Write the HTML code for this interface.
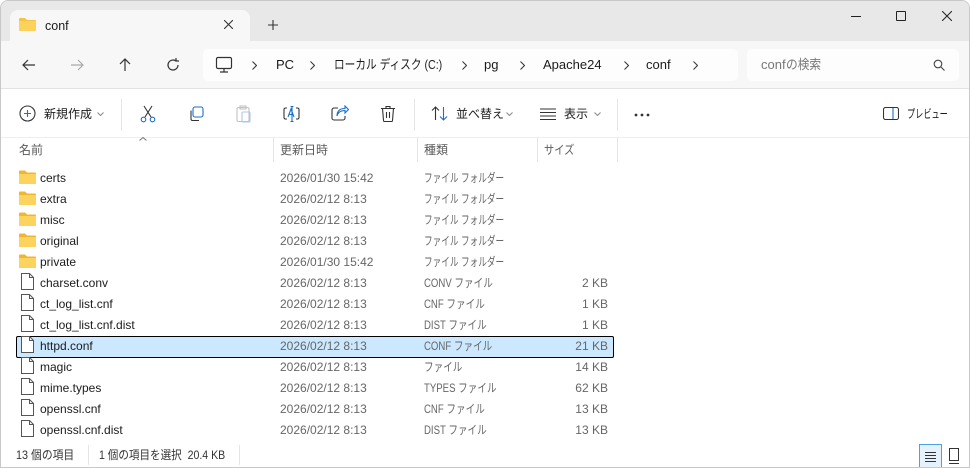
<!DOCTYPE html>
<html><head><meta charset="utf-8"><style>
*{box-sizing:border-box;margin:0;padding:0}
body{width:970px;height:468px;overflow:hidden;background:#fff;font-family:"Liberation Sans","Noto Sans CJK JP",sans-serif;font-size:12px;color:#1b1b1b;position:relative}
.abs{position:absolute}
.win{position:absolute;left:0;top:0;width:970px;height:468px;border:1px solid #c8c8c8;border-radius:8px 8px 0 0;overflow:hidden}
.title{position:absolute;left:0;top:0;width:970px;height:40px;background:#e8e8e8}
.tab{position:absolute;left:9px;top:9px;width:240px;height:32px;background:#f7f7f7;border-radius:8px 8px 0 0}
.nav{position:absolute;left:0;top:40px;width:970px;height:48px;background:#f7f7f7;border-bottom:1px solid #e2e2e2}
.addr{position:absolute;left:202px;top:48px;width:535px;height:32px;background:#fdfdfd;border-radius:5px}
.search{position:absolute;left:746px;top:48px;width:212px;height:32px;background:#fdfdfd;border-radius:5px}
.t{position:absolute;white-space:nowrap;line-height:16px;transform-origin:0 50%}
.hdr{color:#5b5b5b}
.sep{position:absolute;width:1px;background:#e5e5e5}
svg{position:absolute}
</style></head><body>
<div class="win">
<div class="title"></div>
<div class="tab"></div>
<svg style="left:18px;top:16px" width="17" height="14" viewBox="0 0 17 14"><path d="M0 2a1 1 0 0 1 1-1h5l2 2h8a1 1 0 0 1 1 1v9a1 1 0 0 1-1 1H1a1 1 0 0 1-1-1z" fill="#f5c242"/><path d="M0 4h17v9a1 1 0 0 1-1 1H1a1 1 0 0 1-1-1z" fill="#fbd25a"/></svg>
<div class="t" style="left:44px;top:17px;font-size:12.5px">conf</div>
<svg style="left:223px;top:19px" width="9" height="9" viewBox="0 0 9 9" stroke="#333" stroke-width="1.1"><path d="M0 0l9 9M9 0L0 9"/></svg>
<svg style="left:267px;top:19px" width="10" height="10" viewBox="0 0 10 10" stroke="#333" stroke-width="1.1"><path d="M5 0v10M0 5h10"/></svg>
<div class="abs" style="left:850px;top:15px;width:10px;height:1px;background:#222"></div>
<div class="abs" style="left:895px;top:10px;width:10px;height:10px;border:1px solid #222;border-radius:1px"></div>
<svg style="left:941px;top:10px" width="10" height="10" viewBox="0 0 10 10" stroke="#222" stroke-width="1"><path d="M0 0l10 10M10 0L0 10"/></svg>
<div class="nav"></div>
<div class="addr"></div><div class="search"></div>
<svg style="left:20px;top:56px" width="16" height="16" viewBox="0 0 16 16" fill="none" stroke="#333" stroke-width="1.2"><path d="M14 8H2M7 3L2 8l5 5"/></svg>
<svg style="left:68px;top:56px" width="16" height="16" viewBox="0 0 16 16" fill="none" stroke="#aaa" stroke-width="1.2"><path d="M2 8h12M9 3l5 5-5 5"/></svg>
<svg style="left:116px;top:56px" width="16" height="16" viewBox="0 0 16 16" fill="none" stroke="#333" stroke-width="1.2"><path d="M8 14V2M3 7l5-5 5 5"/></svg>
<svg style="left:164px;top:56px" width="16" height="16" viewBox="0 0 16 16" fill="none" stroke="#333" stroke-width="1.2"><path d="M13 8a5 5 0 1 1-2-4M11 1v3h3"/></svg>
<svg style="left:214px;top:55px" width="18" height="18" viewBox="0 0 18 18" fill="none" stroke="#333" stroke-width="1.2"><rect x="1.5" y="1.5" width="15" height="11" rx="1.5"/><path d="M9 12.5v3M5 16h8"/></svg>
<svg style="left:251px;top:60px" width="5" height="9" viewBox="0 0 5 9" fill="none" stroke="#333"><path d="M0.5 0.5l4 4-4 4"/></svg>
<div class="t" style="left:275px;top:56px;font-size:13px">PC</div>
<svg style="left:309px;top:60px" width="5" height="9" viewBox="0 0 5 9" fill="none" stroke="#333"><path d="M0.5 0.5l4 4-4 4"/></svg>
<div class="t" style="left:333px;top:56px;font-size:13px;transform:scaleX(.82)">ローカル ディスク (C:)</div>
<svg style="left:461px;top:60px" width="5" height="9" viewBox="0 0 5 9" fill="none" stroke="#333"><path d="M0.5 0.5l4 4-4 4"/></svg>
<div class="t" style="left:483px;top:56px;font-size:13px">pg</div>
<svg style="left:519px;top:60px" width="5" height="9" viewBox="0 0 5 9" fill="none" stroke="#333"><path d="M0.5 0.5l4 4-4 4"/></svg>
<div class="t" style="left:542px;top:56px;font-size:13px">Apache24</div>
<svg style="left:623px;top:60px" width="5" height="9" viewBox="0 0 5 9" fill="none" stroke="#333"><path d="M0.5 0.5l4 4-4 4"/></svg>
<div class="t" style="left:645px;top:56px;font-size:13px">conf</div>
<svg style="left:692px;top:60px" width="5" height="9" viewBox="0 0 5 9" fill="none" stroke="#333"><path d="M0.5 0.5l4 4-4 4"/></svg>
<div class="t" style="left:760px;top:56px;font-size:13px;color:#777">conf<span style="display:inline-block;transform:scaleX(.9);transform-origin:0 50%">の検索</span></div>
<svg style="left:932px;top:58px" width="12" height="12" viewBox="0 0 12 12" fill="none" stroke="#444" stroke-width="1.1"><circle cx="5" cy="5" r="3.8"/><path d="M8 8l3.5 3.5"/></svg>
<!-- toolbar -->
<svg style="left:18px;top:104px" width="17" height="17" viewBox="0 0 17 17" fill="none" stroke="#333" stroke-width="1.1"><circle cx="8.5" cy="8.5" r="7.5"/><path d="M8.5 5v7M5 8.5h7" stroke="#1a6fc9"/></svg>
<div class="t" style="left:43px;top:105px">新規作成</div>
<svg style="left:96px;top:111px" width="7" height="4" viewBox="0 0 7 4" fill="none" stroke="#888"><path d="M0.5 0.5l3 3 3-3"/></svg>
<div class="sep" style="left:120px;top:98px;height:32px"></div>
<svg style="left:138px;top:104px" width="18" height="18" viewBox="0 0 18 18" fill="none" stroke-width="1.1"><path d="M5 1l7 11M13 1L6 12" stroke="#333"/><circle cx="4.5" cy="14.5" r="2.3" stroke="#1a6fc9"/><circle cx="13.5" cy="14.5" r="2.3" stroke="#1a6fc9"/></svg>
<svg style="left:187px;top:105px" width="16" height="16" viewBox="0 0 16 16" fill="none" stroke-width="1.1"><rect x="5" y="1" width="10" height="10" rx="2" stroke="#1a6fc9"/><path d="M3 4.5v8.5a1.5 1.5 0 0 0 1.5 1.5H11" stroke="#333"/></svg>
<svg style="left:235px;top:104px" width="16" height="18" viewBox="0 0 16 18" fill="none" stroke="#c3c3c3" stroke-width="1.1"><rect x="1" y="2.5" width="12" height="14" rx="1.5"/><rect x="4" y="1" width="6" height="3"/><rect x="6" y="7" width="8" height="10" rx="1" stroke="#a9c9e8"/></svg>
<svg style="left:282px;top:104px" width="18" height="18" viewBox="0 0 18 18" fill="none" stroke-width="1.1"><path d="M4 3H2.5A1.5 1.5 0 0 0 1 4.5v8A1.5 1.5 0 0 0 2.5 14H4M13 3h1.5A1.5 1.5 0 0 1 16 4.5v8a1.5 1.5 0 0 1-1.5 1.5H13" stroke="#333"/><path d="M5 12l3-8 3 8M6 9.5h4M9 1.5v15M7.5 1.5h3M7.5 16.5h3" stroke="#1a6fc9"/></svg>
<svg style="left:330px;top:104px" width="18" height="17" viewBox="0 0 18 17" fill="none" stroke-width="1.1"><path d="M7 3H3a2 2 0 0 0-2 2v8a2 2 0 0 0 2 2h9a2 2 0 0 0 2-2v-2" stroke="#333"/><path d="M6 11c1-4 4-5.5 8-5.5V8l3.5-3.5L14 1v2.5C9 3.5 6 6 6 11z" stroke="#1a6fc9"/></svg>
<svg style="left:379px;top:104px" width="16" height="17" viewBox="0 0 16 17" fill="none" stroke="#333" stroke-width="1.1"><path d="M1 3.5h14M6 3.5V1.5h4v2M2.5 3.5l1 12a1 1 0 0 0 1 1h7a1 1 0 0 0 1-1l1-12M6.5 7v6M9.5 7v6"/></svg>
<div class="sep" style="left:413px;top:98px;height:32px"></div>
<svg style="left:430px;top:105px" width="17" height="16" viewBox="0 0 17 16" fill="none" stroke-width="1.1"><path d="M4.5 14V1M1 4.5L4.5 1 8 4.5" stroke="#333"/><path d="M12.5 1v13M9 10.5l3.5 3.5 3.5-3.5" stroke="#1a6fc9"/></svg>
<div class="t" style="left:455px;top:105px">並べ替え</div>
<svg style="left:505px;top:111px" width="7" height="4" viewBox="0 0 7 4" fill="none" stroke="#888"><path d="M0.5 0.5l3 3 3-3"/></svg>
<svg style="left:539px;top:107px" width="16" height="12" viewBox="0 0 16 12" fill="none" stroke="#333" stroke-width="1.1"><path d="M0 1h16M0 4.5h16M0 8h16M0 11.5h16"/></svg>
<div class="t" style="left:563px;top:105px">表示</div>
<svg style="left:593px;top:111px" width="7" height="4" viewBox="0 0 7 4" fill="none" stroke="#888"><path d="M0.5 0.5l3 3 3-3"/></svg>
<div class="sep" style="left:616px;top:98px;height:32px"></div>
<svg style="left:633px;top:112px" width="16" height="4" viewBox="0 0 16 4" fill="#333"><circle cx="2" cy="2" r="1.4"/><circle cx="8" cy="2" r="1.4"/><circle cx="14" cy="2" r="1.4"/></svg>
<svg style="left:882px;top:106px" width="16" height="13" viewBox="0 0 16 13" fill="none" stroke-width="1.1"><rect x="0.5" y="0.5" width="15" height="12" rx="2" stroke="#333"/><path d="M10 1v11" stroke="#1a6fc9"/></svg>
<div class="t" style="left:906px;top:105px;transform:scaleX(.68)">プレビュー</div>
<div class="abs" style="left:0;top:136px;width:970px;height:1px;background:#eee"></div>
<!-- header -->
<svg style="left:138px;top:136px" width="8" height="4" viewBox="0 0 8 4" fill="none" stroke="#777"><path d="M0.5 3.5l3.5-3 3.5 3"/></svg>
<div class="t hdr" style="left:18px;top:141px">名前</div>
<div class="t hdr" style="left:279px;top:141px">更新日時</div>
<div class="t hdr" style="left:423px;top:141px">種類</div>
<div class="t hdr" style="left:543px;top:141px;transform:scaleX(.85)">サイズ</div>
<div class="sep" style="left:272px;top:137px;height:24px"></div>
<div class="sep" style="left:416px;top:137px;height:24px"></div>
<div class="sep" style="left:536px;top:137px;height:24px"></div>
<div class="sep" style="left:616px;top:137px;height:24px"></div>
<div class="abs" style="left:15px;top:335px;width:598px;height:22px;background:#cce8ff;border:1px solid #000;border-radius:2px"></div>
<div id="rows"></div>
<!-- status -->
<div class="t" style="left:15px;top:446px;color:#333;transform:scaleX(.9)">13 個の項目</div>
<div class="sep" style="left:87px;top:444px;height:20px"></div>
<div class="t" style="left:98px;top:446px;color:#333;transform:scaleX(.88)">1 個の項目を選択&nbsp; 20.4 KB</div>
<div class="sep" style="left:238px;top:444px;height:20px"></div>
<div class="abs" style="left:918px;top:443px;width:23px;height:25px;background:#e5f1fb;border:1px solid #4aa3e8"></div>
<svg style="left:924px;top:450px" width="11" height="11" viewBox="0 0 11 11" stroke="#333" stroke-width="1"><path d="M0 1.5h11M0 4.5h11M0 7.5h11M0 10.5h11"/></svg>
<svg style="left:948px;top:447px" width="10" height="17" viewBox="0 0 10 17" fill="none" stroke="#333" stroke-width="1"><rect x="0.5" y="0.5" width="9" height="12"/><path d="M0 15.5h10"/></svg>
</div>
<script>
var F=[["certs","2026/01/30 15:42","ファイル フォルダー","",1],["extra","2026/02/12 8:13","ファイル フォルダー","",1],["misc","2026/02/12 8:13","ファイル フォルダー","",1],["original","2026/02/12 8:13","ファイル フォルダー","",1],["private","2026/01/30 15:42","ファイル フォルダー","",1],["charset.conv","2026/02/12 8:13","CONV ファイル","2 KB"],["ct_log_list.cnf","2026/02/12 8:13","CNF ファイル","1 KB"],["ct_log_list.cnf.dist","2026/02/12 8:13","DIST ファイル","1 KB"],["httpd.conf","2026/02/12 8:13","CONF ファイル","21 KB"],["magic","2026/02/12 8:13","ファイル","14 KB"],["mime.types","2026/02/12 8:13","TYPES ファイル","62 KB"],["openssl.cnf","2026/02/12 8:13","CNF ファイル","13 KB"],["openssl.cnf.dist","2026/02/12 8:13","DIST ファイル","13 KB"]];
var h="";F.forEach(function(f,i){var y=169+i*21;
h+=f[4]?'<svg style="left:18px;top:'+(y-0)+'px" width="17" height="14" viewBox="0 0 17 14"><path d="M0 1.5a1 1 0 0 1 1-1h5l2 2h8a1 1 0 0 1 1 1v9.5a1 1 0 0 1-1 1H1a1 1 0 0 1-1-1z" fill="#efb72e"/><path d="M0 4h17v9a1 1 0 0 1-1 1H1a1 1 0 0 1-1-1z" fill="#fcd35c"/></svg>':'<svg style="left:20px;top:'+(y-2)+'px" width="13" height="17" viewBox="0 0 13 17" fill="#fff" stroke="#555" stroke-width="1"><path d="M0.5 0.5h8l4 4v12h-12z"/><path d="M8.5 0.5v4h4" fill="none"/></svg>';
var sc=f[4]?0.72:0.8;
h+='<div class="t" style="left:39px;top:'+(y)+'px">'+f[0]+'</div><div class="t" style="left:279px;top:'+y+'px;color:#666">'+f[1]+'</div><div class="t" style="left:423px;top:'+y+'px;color:#666;transform:scaleX('+sc+')">'+f[2]+'</div><div class="t" style="right:361px;top:'+y+'px;color:#666">'+f[3]+'</div>';});
document.getElementById("rows").innerHTML=h;
</script>
</body></html>
